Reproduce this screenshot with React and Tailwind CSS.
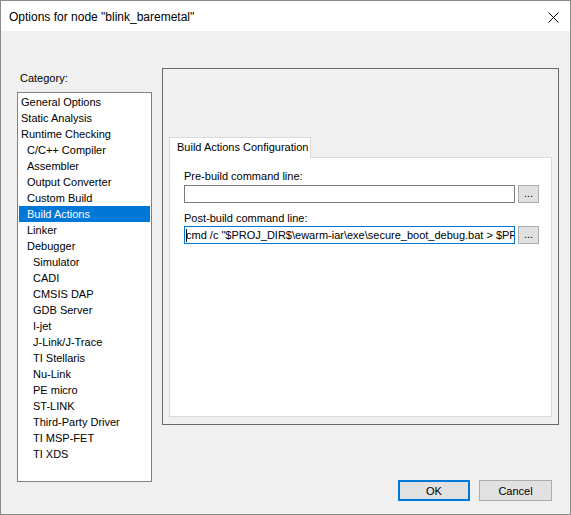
import React from 'react';

const categories = [
  { label: 'General Options', level: 0 },
  { label: 'Static Analysis', level: 0 },
  { label: 'Runtime Checking', level: 0 },
  { label: 'C/C++ Compiler', level: 1 },
  { label: 'Assembler', level: 1 },
  { label: 'Output Converter', level: 1 },
  { label: 'Custom Build', level: 1 },
  { label: 'Build Actions', level: 1, selected: true },
  { label: 'Linker', level: 1 },
  { label: 'Debugger', level: 1 },
  { label: 'Simulator', level: 2 },
  { label: 'CADI', level: 2 },
  { label: 'CMSIS DAP', level: 2 },
  { label: 'GDB Server', level: 2 },
  { label: 'I-jet', level: 2 },
  { label: 'J-Link/J-Trace', level: 2 },
  { label: 'TI Stellaris', level: 2 },
  { label: 'Nu-Link', level: 2 },
  { label: 'PE micro', level: 2 },
  { label: 'ST-LINK', level: 2 },
  { label: 'Third-Party Driver', level: 2 },
  { label: 'TI MSP-FET', level: 2 },
  { label: 'TI XDS', level: 2 },
];

const indent = ['pl-[2px]', 'pl-[8px]', 'pl-[14px]'];

const EllipsisButton = () => (
  <button className="ml-[3px] w-[21px] h-[18px] bg-[#e1e1e1] border border-[#adadad] text-[11px] leading-[14px] text-black flex items-end justify-center pb-[2px]">
    ...
  </button>
);

const App = () => {
  return (
    <div
      className="w-[571px] h-[515px] border border-[#8a8a8a] bg-[#f0f0f0] flex flex-col text-black"
      style={{ fontFamily: '"Liberation Sans", Arial, sans-serif' }}
    >
      {/* title bar */}
      <div className="h-[30px] bg-white flex items-center justify-between pl-[8px] pr-[11px]">
        <span className="text-[12px] leading-[14px] pt-[1px]">Options for node "blink_baremetal"</span>
        <svg width="11" height="11" viewBox="0 0 11 11" className="mt-[2px]">
          <path d="M0.5 0.5 L10.5 10.5 M10.5 0.5 L0.5 10.5" stroke="#000" strokeWidth="1" fill="none" />
        </svg>
      </div>

      <div className="flex-1 flex">
        {/* left column */}
        <div className="ml-[16px] w-[135px] flex flex-col">
          <div className="mt-[40px] text-[11px] leading-[14px] pl-[3px]">Category:</div>
          <div className="mt-[7px] h-[390px] bg-white border border-[#828282] p-[1px]">
            {categories.map((c) => (
              <div
                key={c.label}
                className={`h-[16px] leading-[16px] text-[11px] whitespace-nowrap ${indent[c.level]} ${
                  c.selected ? 'bg-[#0078d7] text-white' : ''
                }`}
              >
                {c.label}
              </div>
            ))}
          </div>
        </div>

        {/* right column */}
        <div className="ml-[10px] w-[397px] flex flex-col">
          <div className="mt-[37px] h-[357px] border border-[#696969] pt-[68px] px-[6px] pb-[7px] flex flex-col">
            <div className="flex">
              <div className="relative z-10 -mb-px w-[142px] h-[21px] bg-white border border-b-0 border-[#d9d9d9] text-[11px] leading-[14px] pl-[7px] pt-[2px]">
                Build Actions Configuration
              </div>
            </div>
            <div className="flex-1 bg-white border border-[#d9d9d9] pl-[14px] pr-[12px] pt-[11px]">
              <div className="text-[11px] leading-[14px]">Pre-build command line:</div>
              <div className="mt-[2px] flex">
                <div className="flex-1 h-[18px] border border-[#7a7a7a] bg-white" />
                <EllipsisButton />
              </div>
              <div className="mt-[8px] text-[11px] leading-[14px]">Post-build command line:</div>
              <div className="mt-[1px] flex">
                <div className="flex-1 h-[18px] border border-[#0078d7] bg-white overflow-hidden flex items-center pl-[1px]">
                  <span className="w-px h-[13px] bg-black shrink-0" />
                  <span className="text-[11px] leading-[14px] whitespace-nowrap -ml-[1px]">
                    cmd /c "$PROJ_DIR$\ewarm-iar\exe\secure_boot_debug.bat &gt; $PR
                  </span>
                </div>
                <EllipsisButton />
              </div>
            </div>
          </div>

          <div className="mt-[55px] flex justify-end pr-[7px] gap-[9px]">
            <button className="w-[72px] h-[21px] bg-[#e1e1e1] border-2 border-[#0078d7] text-[11px] leading-[14px]">
              OK
            </button>
            <button className="w-[73px] h-[21px] bg-[#e1e1e1] border border-[#adadad] text-[11px] leading-[14px]">
              Cancel
            </button>
          </div>
        </div>
      </div>
    </div>
  );
};

export default App;
